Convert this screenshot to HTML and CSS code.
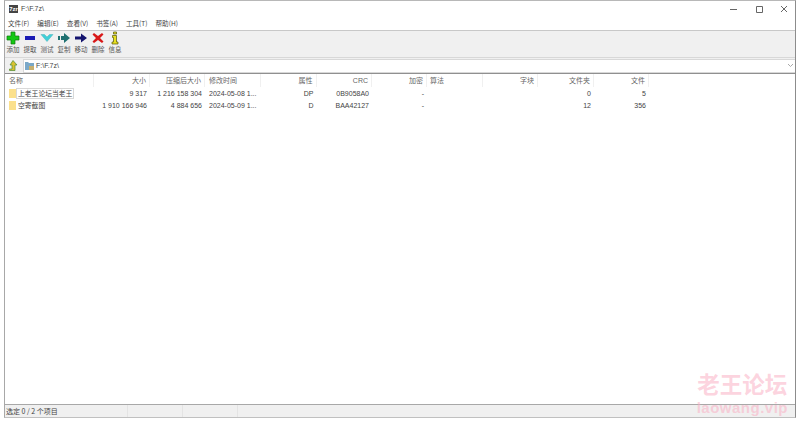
FILE: index.html
```html
<!DOCTYPE html>
<html lang="zh-CN">
<head>
    <meta charset="UTF-8">
    <title>F:\F.7z\</title>
    <link rel="stylesheet" href="styles.css">
</head>
<body>
    <div class="window">
        <div class="titlebar">
            <span class="app-icon">7zr</span>
            <span class="title">F:\F.7z\</span>
            <div class="controls">
                <svg width="8" height="8" viewBox="0 0 8 8"><path d="M0 4.500h7" stroke="#666" fill="none"/></svg>
                <svg width="8" height="8" viewBox="0 0 8 8"><path d="M1.500 1.500h6v6h-6z" stroke="#666" fill="none"/></svg>
                <svg width="8" height="8" viewBox="0 0 8 8"><path d="M1 1l6 6M7 1L1 7" stroke="#666" fill="none"/></svg>
            </div>
        </div>
        <div class="menubar">
            <span>文件(F)</span><span>编辑(E)</span><span>查看(V)</span><span>书签(A)</span><span>工具(T)</span><span>帮助(H)</span>
        </div>
        <div class="toolbar">
            <div class="tool">
                <svg width="14" height="14" viewBox="0 0 14 14"><path d="M5 1h4v4h4v4H9v4H5V9H1V5h4z" fill="#14c814" stroke="#0f7a0f" stroke-width=".7"/></svg>
                <span>添加</span>
            </div>
            <div class="tool">
                <svg width="14" height="14" viewBox="0 0 14 14"><path d="M2 5h10v4H2z" fill="#1c1cb4"/></svg>
                <span>提取</span>
            </div>
            <div class="tool">
                <svg width="14" height="14" viewBox="0 0 14 14"><path d="M1 3.500h3.500L7 6l2.500-2.500H13l-6 7z" fill="#3fd0d8" stroke="#58b8c0" stroke-width=".6"/></svg>
                <span>测试</span>
            </div>
            <div class="tool">
                <svg width="14" height="14" viewBox="0 0 14 14"><path d="M1 5h2v4H1zM4 5h3V2l6 5-6 5V9H4z" fill="#1f7070"/></svg>
                <span>复制</span>
            </div>
            <div class="tool">
                <svg width="14" height="14" viewBox="0 0 14 14"><path d="M1 5.500h6V2.500L13 7l-6 4.500V8.500H1z" fill="#14146e"/></svg>
                <span>移动</span>
            </div>
            <div class="tool">
                <svg width="14" height="14" viewBox="0 0 14 14"><path d="M3 2l4 3 4-3 1.500 1.500L9 7l3.500 3.500L11 12 7 9l-4 3-1.500-1.500L5 7 1.500 3.500z" fill="#d81818"/></svg>
                <span>删除</span>
            </div>
            <div class="tool">
                <svg width="14" height="14" viewBox="0 0 14 14"><path d="M5.500 1h3v2h-3zM4.500 4.500h4v6.500h1.500v2H4v-2h1.500V6.500h-1z" fill="#e8e020" stroke="#55550a" stroke-width=".7"/></svg>
                <span>信息</span>
            </div>
        </div>
        <div class="addressbar">
            <svg class="up" width="10" height="11" viewBox="0 0 10 11"><path d="M5 .5l4 4.500H7v5.500H1.500V9H4V5H2z" fill="#d8c030" stroke="#4a8a30" stroke-width=".7"/></svg>
            <div class="path">
                <svg width="9" height="8" viewBox="0 0 9 8"><path d="M0 0h3l1 1h5v7H0z" fill="#7aa8c8"/><path d="M4 4h5v4H4z" fill="#c8b070"/></svg>
                <span class="path-text">F:\F.7z\</span>
                <svg class="chevron" width="7" height="5" viewBox="0 0 7 5"><path d="M1 1l2.500 2.500L6 1" stroke="#aaa" fill="none"/></svg>
            </div>
        </div>
        <div class="list">
            <div class="row head">
                <span class="left name-head">名称</span>
                <span>大小</span>
                <span>压缩后大小</span>
                <span class="left">修改时间</span>
                <span>属性</span>
                <span>CRC</span>
                <span>加密</span>
                <span class="left algo">算法</span>
                <span>字块</span>
                <span>文件夹</span>
                <span>文件</span>
            </div>
            <div class="row item">
                <span class="left name"><i class="folder"></i><b class="selected">上老王论坛当老王</b></span>
                <span>9 317</span>
                <span>1 216 158 304</span>
                <span class="left">2024-05-08 1...</span>
                <span>DP</span>
                <span>0B9058A0</span>
                <span>-</span>
                <span class="left"></span>
                <span></span>
                <span>0</span>
                <span>5</span>
            </div>
            <div class="row item">
                <span class="left name"><i class="folder"></i><b>空寄截图</b></span>
                <span>1 910 166 946</span>
                <span>4 884 656</span>
                <span class="left">2024-05-09 1...</span>
                <span>D</span>
                <span>BAA42127</span>
                <span>-</span>
                <span class="left"></span>
                <span></span>
                <span>12</span>
                <span>356</span>
            </div>
        </div>
        <div class="statusbar">
            <span class="status-main">选定 0 / 2 个项目</span>
            <span class="status-cell"></span>
            <span class="status-cell"></span>
            <span class="status-cell"></span>
        </div>
    </div>
    <div class="watermark">
        <div class="wm-cn">老王论坛</div>
        <div class="wm-en">laowang.vip</div>
    </div>
</body>
</html>
```

FILE: styles.css
```css
* {
    margin: 0;
    padding: 0;
    box-sizing: border-box;
}

html, body {
    height: 100%;
    overflow: hidden;
}

body {
    background: #fff;
    font-family: "Noto Sans CJK SC", "Liberation Sans", sans-serif;
    font-size: 7px;
    color: #444;
    padding: 0 4px 4px 4px;
}

.window {
    height: 100%;
    display: flex;
    flex-direction: column;
    background: #fff;
    border-right: 1px solid #8c8c8c;
    border-left: 1px solid #a8a8a8;
    border-bottom: 1px solid #c0c0c0;
    border-top: 1px solid #b8b8b8;
}

.titlebar {
    height: 15px;
    display: flex;
    align-items: center;
    padding-left: 4px;
}

.app-icon {
    width: 9px;
    height: 8px;
    background: #444;
    color: #fff;
    font: bold 6px/8px "Liberation Sans", sans-serif;
    text-align: center;
    margin-right: 3px;
}

.title {
    font: 7px "Liberation Sans", sans-serif;
}

.controls {
    margin-left: auto;
    display: flex;
    gap: 17px;
    padding-right: 7px;
}

.menubar {
    height: 14px;
    display: flex;
    align-items: center;
    gap: 8px;
    padding-left: 3px;
    font-size: 6.600px;
}

.toolbar {
    height: 28px;
    display: flex;
    gap: 3px;
    padding-left: 1px;
    background: #f0f0f0;
    border-top: 1px solid #c8c8c8;
    border-bottom: 1px solid #d8d8d8;
}

.tool {
    width: 14px;
    display: flex;
    flex-direction: column;
    align-items: center;
    font-size: 6.500px;
    line-height: 9px;
    white-space: nowrap;
    color: #555;
}

.addressbar {
    height: 16px;
    display: flex;
    align-items: center;
    padding-left: 3px;
    gap: 5px;
    background: #f0f0f0;
    border-bottom: 1px solid #909090;
}

.path {
    flex: 1;
    height: 14px;
    display: flex;
    align-items: center;
    gap: 2px;
    padding: 0 1px;
    background: #fff;
    border: 1px solid #d8d8d8;
    border-right: 0;
}

.path-text {
    font: 7px "Liberation Sans", sans-serif;
}

.chevron {
    margin-left: auto;
}

.list {
    flex: 1;
}

.row {
    display: grid;
    grid-template-columns: 89px 56px 55px 56px 55.500px 55.500px 55px 56px 55px 56px 55px;
    align-items: center;
    height: 12px;
}

.row span {
    text-align: right;
    padding-right: 3px;
    font-family: "Liberation Sans", "Noto Sans CJK SC", sans-serif;
    font-size: 7px;
    white-space: nowrap;
    overflow: hidden;
}

.row span.left {
    text-align: left;
    padding: 0 0 0 4px;
}

.head {
    height: 13px;
}

.head span {
    color: #666;
    border-right: 1px solid #f0f0f0;
    line-height: 13px;
}

.head span.name-head {
    padding-left: 4px;
}

.head span.algo {
    padding-left: 3px;
}

.row span.name {
    display: flex;
    align-items: center;
    overflow: visible;
    padding-left: 4px;
}

.folder {
    width: 7px;
    height: 9px;
    flex: none;
    background: #fbe08c;
}

.name b {
    font-weight: normal;
    font-size: 6.800px;
    padding: 0 2px;
    white-space: nowrap;
    line-height: 11px;
}

.name b.selected {
    outline: 1px solid #d8d8d8;
    outline-offset: -1px;
}

.statusbar {
    height: 13px;
    display: flex;
    align-items: center;
    background: #f0f0f0;
    border-top: 1px solid #a8a8a8;
    font-size: 7px;
}

.status-main {
    width: 122px;
    padding-left: 1px;
}

.status-cell {
    width: 55px;
    height: 100%;
    border-left: 1px solid #e4e4e4;
}

.watermark {
    position: absolute;
    right: 12px;
    bottom: 7px;
    color: rgba(250, 175, 195, .55);
    text-align: center;
    font-weight: bold;
}

.wm-cn {
    font-size: 22.500px;
    line-height: 22px;
    margin-bottom: 6px;
}

.wm-en {
    font: bold 15px/15px "Liberation Sans", sans-serif;
    letter-spacing: .5px;
}
```
